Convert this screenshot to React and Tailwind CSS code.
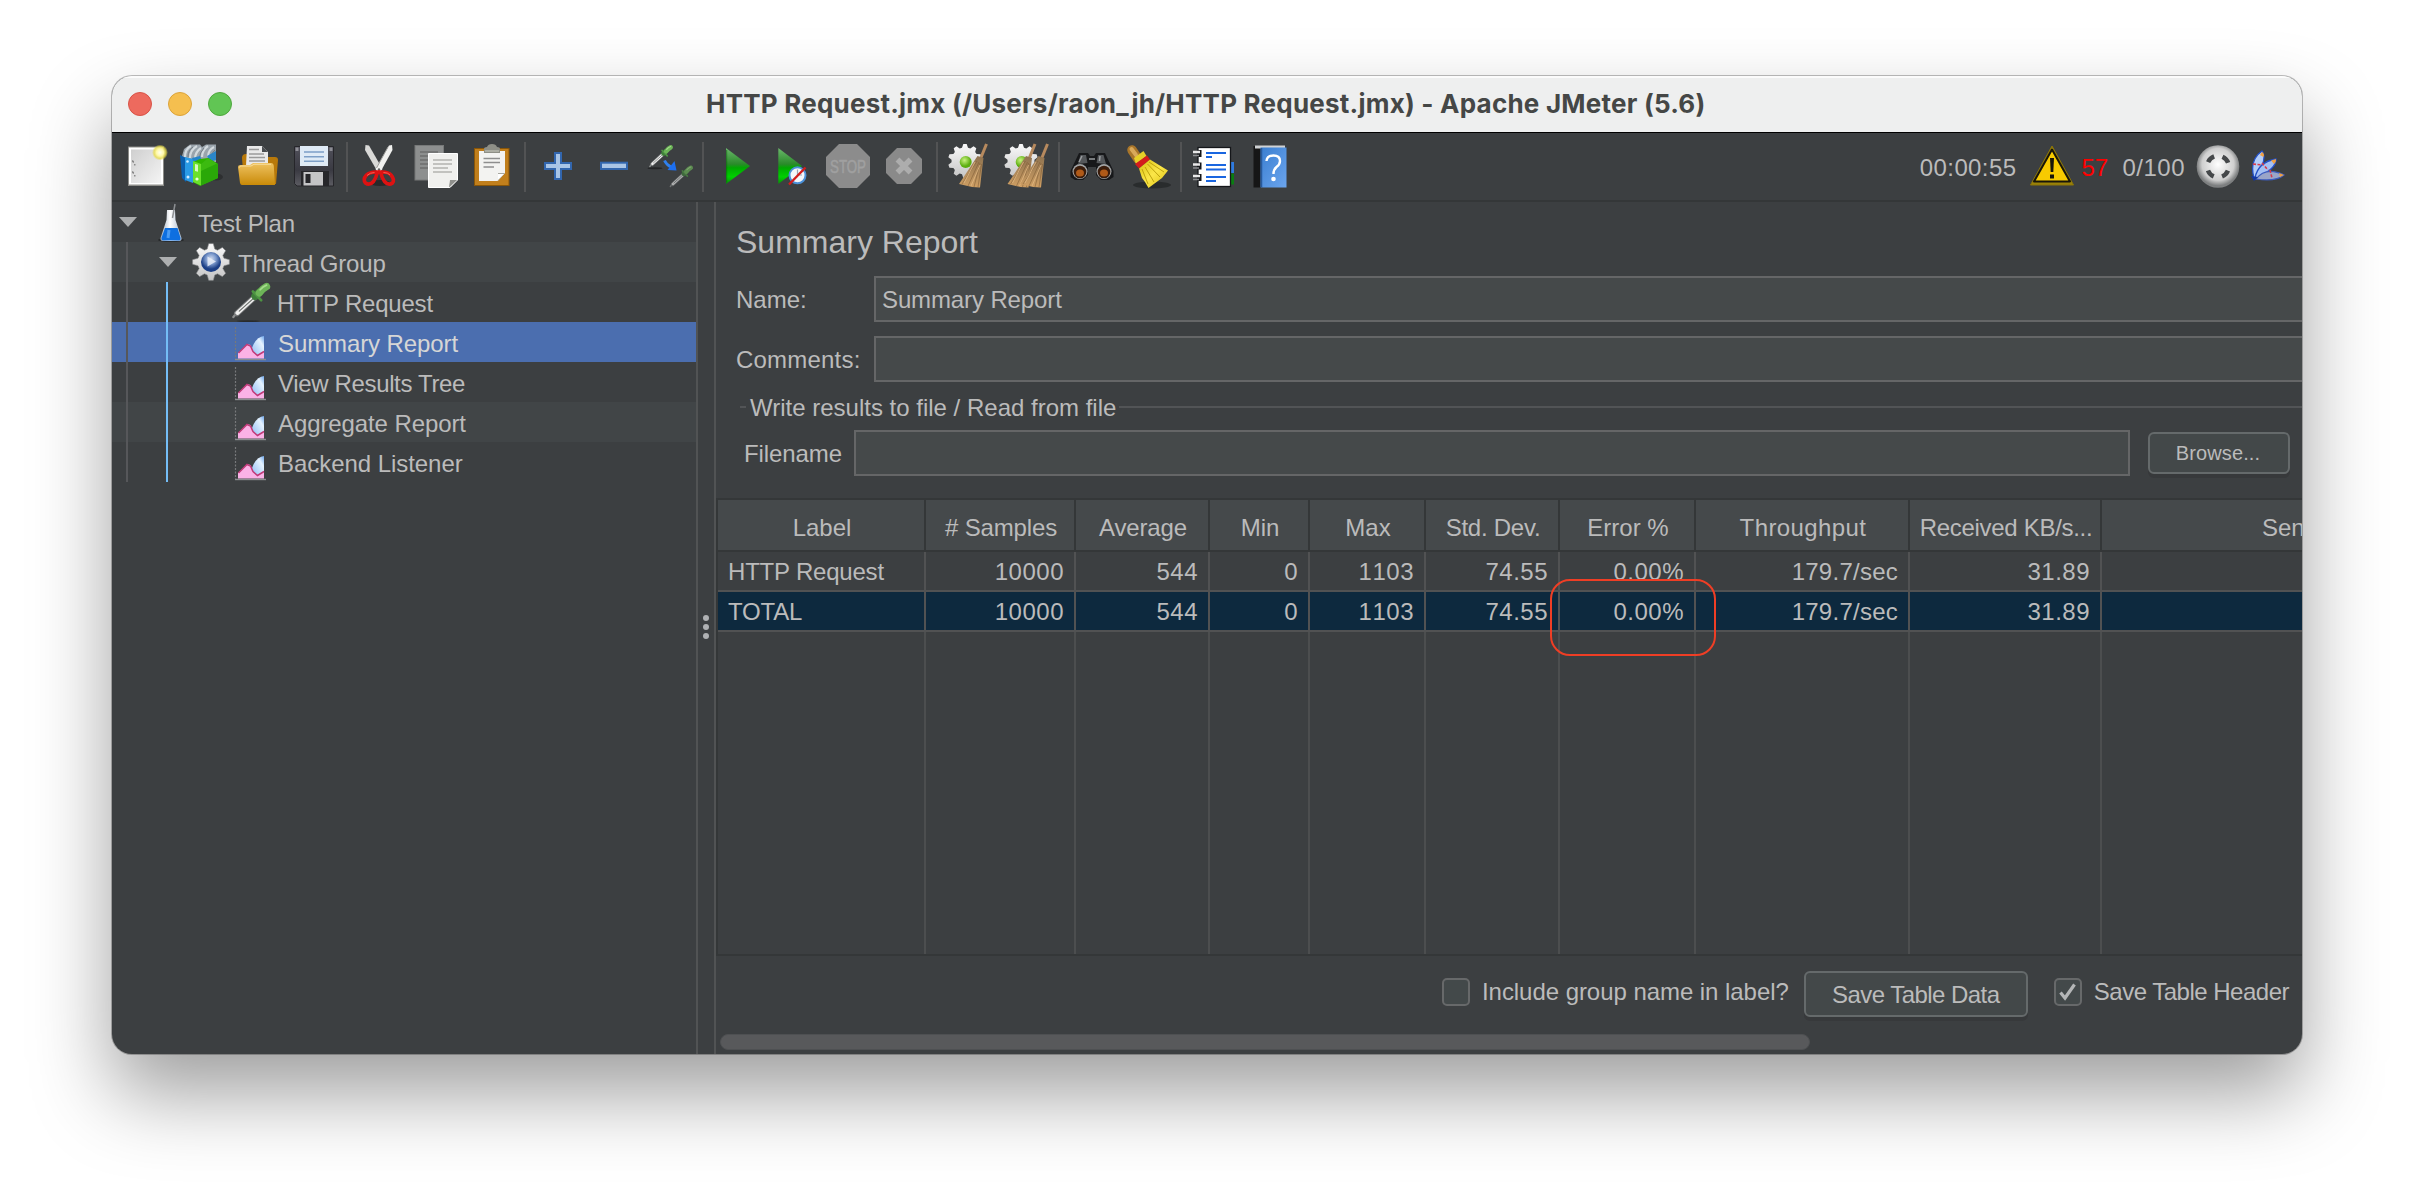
import React from "react";

function Svg({ children, className = "h-11 w-11" }) {
  return (
    <svg viewBox="0 0 44 44" className={className + " shrink-0"} fill="none" overflow="visible">
      {children}
    </svg>
  );
}

function Defs() {
  return (
    <svg className="absolute h-0 w-0" aria-hidden="true">
      <defs>
        <linearGradient id="page" x1="0" y1="0" x2="1" y2="1">
          <stop offset="0" stopColor="#cfcfcf" />
          <stop offset="1" stopColor="#f4f4f4" />
        </linearGradient>
        <radialGradient id="glow">
          <stop offset="0" stopColor="#fffef0" />
          <stop offset="0.45" stopColor="#fff9a8" />
          <stop offset="0.75" stopColor="#e8dc4c" stopOpacity="0.8" />
          <stop offset="1" stopColor="#e8dc4c" stopOpacity="0" />
        </radialGradient>
        <linearGradient id="folder" x1="0" y1="0" x2="0" y2="1">
          <stop offset="0" stopColor="#eec260" />
          <stop offset="1" stopColor="#c98a08" />
        </linearGradient>
        <linearGradient id="floppy" x1="0" y1="0" x2="0" y2="1">
          <stop offset="0" stopColor="#50505a" />
          <stop offset="0.6" stopColor="#3a3a42" />
          <stop offset="1" stopColor="#5c5c62" />
        </linearGradient>
        <linearGradient id="playGreen" x1="0" y1="0" x2="0" y2="1">
          <stop offset="0" stopColor="#6cb86c" />
          <stop offset="0.45" stopColor="#2a8a2a" />
          <stop offset="0.55" stopColor="#00a800" />
          <stop offset="0.8" stopColor="#00d000" />
          <stop offset="1" stopColor="#0a8a0a" />
        </linearGradient>
        <linearGradient id="straw" x1="0" y1="0" x2="0" y2="1">
          <stop offset="0" stopColor="#8f7350" />
          <stop offset="1" stopColor="#cf9f63" />
        </linearGradient>
        <linearGradient id="gearGray" x1="0" y1="0" x2="0" y2="1">
          <stop offset="0" stopColor="#fafafa" />
          <stop offset="1" stopColor="#c4c4c4" />
        </linearGradient>
        <radialGradient id="lime" cx="0.4" cy="0.35">
          <stop offset="0" stopColor="#c9f280" />
          <stop offset="1" stopColor="#5cae10" />
        </radialGradient>
        <linearGradient id="skirt" x1="0" y1="0" x2="1" y2="1">
          <stop offset="0" stopColor="#d8bf10" />
          <stop offset="0.5" stopColor="#fbe648" />
          <stop offset="1" stopColor="#dcc010" />
        </linearGradient>
        <linearGradient id="book" x1="0" y1="0" x2="1" y2="1">
          <stop offset="0" stopColor="#3a7ed0" />
          <stop offset="1" stopColor="#6ba5ee" />
        </linearGradient>
        <radialGradient id="ball" cx="0.5" cy="0.45">
          <stop offset="0" stopColor="#ffffff" />
          <stop offset="0.75" stopColor="#cfcfcf" />
          <stop offset="1" stopColor="#7d7f80" />
        </radialGradient>
        <linearGradient id="sky" x1="1" y1="0" x2="0" y2="1">
          <stop offset="0" stopColor="#6fa8ee" />
          <stop offset="0.3" stopColor="#e6f3ff" />
          <stop offset="1" stopColor="#8fbcf4" />
        </linearGradient>
        <radialGradient id="gearBlue" cx="0.5" cy="0.35">
          <stop offset="0" stopColor="#d4dcee" />
          <stop offset="0.5" stopColor="#7f9cce" />
          <stop offset="1" stopColor="#1c3f86" />
        </radialGradient>
        <linearGradient id="glass" x1="0" y1="0" x2="1" y2="0">
          <stop offset="0" stopColor="#9aa8b8" />
          <stop offset="0.45" stopColor="#ffffff" />
          <stop offset="1" stopColor="#a8b8cc" />
        </linearGradient>
      </defs>
    </svg>
  );
}

function gearPath(cx, cy, teeth, ro, ri) {
  const pts = [];
  for (let i = 0; i < teeth; i++) {
    const a = (i / teeth) * Math.PI * 2 - Math.PI / 2;
    const w = Math.PI / teeth;
    [[-0.95, ri], [-0.42, ro], [0.42, ro], [0.95, ri]].forEach(([k, r]) => {
      const t = a + w * k * 0.75;
      pts.push((cx + Math.cos(t) * r).toFixed(2) + "," + (cy + Math.sin(t) * r).toFixed(2));
    });
  }
  return "M" + pts.join("L") + "Z";
}

const NewIcon = () => (
  <Svg>
    <rect x="4" y="2.5" width="36" height="39.5" fill="#8c8c88" />
    <rect x="5" y="3.5" width="34" height="37" fill="#fff" />
    <rect x="7" y="5.5" width="30" height="33.5" fill="url(#page)" />
    <path d="M8 16l2 1v2l-2-1zM8 27l2 1v2l-2-1zM10 20h1.5v1.5H10zM10 31h1.5v1.5H10z" fill="#8a8a8a" />
    <circle cx="36" cy="8.5" r="8" fill="url(#glow)" />
  </Svg>
);

const TemplatesIcon = () => (
  <Svg>
    <ellipse cx="36" cy="33" rx="7" ry="3.5" fill="#000" opacity="0.25" />
    <path d="M2 12L4 5L10 0.5H20L22 3L26 0.500H36V18L20 22L4 20Z" fill="#9aa4ac" />
    <path d="M5 13Q5 5 11 2M10 14Q10 6 17 2M15 15Q15 8 21 4M22 13Q22 6 28 2M28 13Q28 6 34 3" stroke="#d3dade" strokeWidth="2.200" />
    <path d="M8 13Q8 6 13 3M19 15Q20 8 24 4M31 13Q32 8 35 6" stroke="#747d84" strokeWidth="1" />
    <path d="M27 12L36 7V16L30 18Z" fill="#2b86c8" />
    <path d="M0 11L6 14V38L2 34Z" fill="#0a5fae" />
    <path d="M5 13L13 15V39L5 36Z" fill="#2a9be6" />
    <path d="M12 14L20 12L22 17L14 20Z" fill="#2485cc" />
    <path d="M13 18L20 15L28 14L38 20V34L20 42L13 38Z" fill="#2fb400" />
    <path d="M13 17L21 20V41.5L13 38Z" fill="#6be02c" />
    <path d="M21 20L28 14L38 20V34L21 41.5Z" fill="#2aa808" />
    <path d="M21 20L28 14L37 19.500L21 27Z" fill="#3cba10" />
    <path d="M15 20l3 .8v7l-3-.8z" fill="#d8f8c4" />
    <circle cx="7.500" cy="17.500" r="1.300" fill="#d4ecff" />
    <circle cx="8" cy="33" r="1.500" fill="#d4ecff" />
    <circle cx="17" cy="35" r="1.600" fill="#e8ffd8" />
  </Svg>
);

const OpenIcon = () => (
  <Svg>
    <path d="M6 14Q6 10 10 10H16L18 13H39Q42 13 42 16L40 40H8Z" fill="#b8790a" />
    <path d="M11 2H26L32 8V22H10Z" fill="#e9e9e9" />
    <path d="M26 2L32 8H26Z" fill="#4a4d50" />
    <path d="M13 5.500H23M13 10H28M13 13.500H29M13 17H29" stroke="#9a9a9a" strokeWidth="1.700" />
    <path d="M2 23Q2 21 4.500 21H14L17 19H35Q37.500 19 37.800 22L39 41H6Q4.500 41 4 39Z" fill="url(#folder)" />
    <path d="M3.500 23.500Q3.500 22 5 22H15L18 20.300H35" stroke="#f7dc9a" strokeWidth="1" />
  </Svg>
);

const SaveIcon = () => (
  <Svg>
    <path d="M2.500 2.500H41.500V42H5L2.500 39.500Z" fill="url(#floppy)" stroke="#26262a" />
    <path d="M3.500 3.500H6.500V7H3.500ZM37.500 3.500H40.500V7H37.500Z" fill="#8d8d94" />
    <rect x="8" y="2" width="28" height="20" fill="#dfeaf6" />
    <path d="M12 8H32M12 12.700H32M12 17.300H32" stroke="#7e9fc8" strokeWidth="1.600" />
    <rect x="9" y="27" width="28" height="15" fill="#26262a" />
    <rect x="11.500" y="28" width="19.500" height="13.500" fill="#c4c4c6" />
    <rect x="13.500" y="30" width="5" height="9" fill="#26262a" />
  </Svg>
);

const CutIcon = () => (
  <Svg>
    <ellipse cx="22" cy="39" rx="11" ry="3" fill="#000" opacity="0.35" />
    <path d="M7.500 1L11 1.500L24.500 25L21 29.500L18 25L7 6Z" fill="#d9d9d7" />
    <path d="M34 1L31 1.500L17.500 25L20.500 29.500L24 25L34.500 6Z" fill="#f1f1ef" />
    <path d="M30 3L18.500 24" stroke="#9b9b98" strokeWidth="1" />
    <circle cx="21" cy="25.500" r="1.200" fill="#666" />
    <path d="M19.500 28Q12 27.500 8.500 31Q4.500 35.500 7.500 39Q11.500 42 15.500 37.500Q18 34 19.500 28Z" stroke="#dd1212" strokeWidth="3.600" />
    <path d="M22.500 28Q30 27.500 33 31Q37 35.500 34.500 39Q30.500 42 26.500 37.500Q24 34 22.500 28Z" stroke="#dd1212" strokeWidth="3.600" />
    <path d="M16.500 28.500Q12 28.500 9 31.500M25.500 28.500Q30 28.500 32 31" stroke="#ff6a5a" strokeWidth="0.900" />
  </Svg>
);

const CopyIcon = () => (
  <Svg>
    <rect x="1" y="1.500" width="28.500" height="34.500" fill="#8d8f8f" stroke="#777979" />
    <path d="M6 8H24M6 12H18M6 16H18M6 20H18M6 24H18" stroke="#6d6f6f" strokeWidth="1.400" />
    <path d="M14.500 9.500H43.500V36L36 43.500H14.500Z" fill="#f0f0ee" stroke="#fff" />
    <path d="M19 16H38M19 20H38M19 24H34M19 28H38" stroke="#b2b2b0" strokeWidth="1.400" />
    <path d="M43 36H36L35 43.500Z" fill="#8f908c" />
  </Svg>
);

const PasteIcon = () => (
  <Svg>
    <rect x="4.500" y="4.500" width="34.500" height="37" fill="#c17f1c" stroke="#8a5608" />
    <path d="M9 7H35V29L27.500 37H9Z" fill="#f3f3f1" />
    <path d="M35 29H28V37Z" fill="#a6a69f" />
    <path d="M34 30L28 36V30Z" fill="#fff" />
    <path d="M13.500 14.500H30M13.500 18.500H30M13.500 23H24" stroke="#8e8e8e" strokeWidth="1.500" />
    <path d="M14 9V5Q14 3 17 3Q18 0 22 0Q26 0 27 3Q30 3 30 5V9Z" fill="#8e8f86" />
    <path d="M15 7H29" stroke="#b7b8ae" strokeWidth="1.500" />
  </Svg>
);

const PlusIcon = () => (
  <Svg>
    <path d="M18 8H26V18H36V26H26V36H18V26H8V18H18Z" fill="#3266ae" />
    <path d="M20 10H24V20H34V24H24V34H20V24H10V20H20Z" fill="#a9c5e6" />
  </Svg>
);

const MinusIcon = () => (
  <Svg>
    <rect x="8" y="17.700" width="28" height="8.300" fill="#3266ae" />
    <rect x="10" y="19.700" width="24" height="4.300" fill="#a9c5e6" />
  </Svg>
);

function Pipette() {
  return (
    <g strokeLinecap="round">
      <path d="M1.500 38.500L6 33" stroke="#8d8f8f" strokeWidth="2.500" />
      <path d="M5.500 34.500L24 17.500" stroke="#77797a" strokeWidth="6.500" />
      <path d="M6 34L24 17.500" stroke="#f0f0f0" strokeWidth="4.400" />
      <path d="M8 32L23 18.500" stroke="#6b6f6b" strokeWidth="1.300" />
      <path d="M25.500 15.500L30 11.500" stroke="#3f7f3a" strokeWidth="8.500" />
      <path d="M23 10.500L32 20" stroke="#4d9442" strokeWidth="3" />
      <path d="M30 12Q34 7 38 5" stroke="#6db558" strokeWidth="8" />
      <path d="M31 8.500Q34 5 38 3.500" stroke="#a5dc8c" strokeWidth="2" />
    </g>
  );
}

const ToggleIcon = () => (
  <Svg>
    <ellipse cx="7" cy="24.300" rx="7.500" ry="1" fill="#000" opacity="0.4" />
    <g transform="translate(1 0.500) scale(0.570)"><Pipette /></g>
    <g transform="translate(21.500 21) scale(0.560)" opacity="0.65"><Pipette /></g>
    <path d="M16.500 16.500Q18.500 21 23 23" stroke="#2f80ee" strokeWidth="2.800" />
    <path d="M26.500 17L28.500 26.500L19.500 26Z" fill="#1d6ff0" />
  </Svg>
);

const PlayIcon = () => (
  <Svg>
    <path d="M12 4L36 22L12 40Z" fill="url(#playGreen)" />
    <path d="M12.700 6V38.500" stroke="#0b5c0b" strokeWidth="1" opacity="0.600" />
  </Svg>
);

const PlayNoTimerIcon = () => (
  <Svg>
    <path d="M8.300 4L32 22L8.300 40Z" fill="url(#playGreen)" />
    <circle cx="27.500" cy="31.300" r="8" fill="#f3f6fa" stroke="#4a90d8" strokeWidth="2" />
    <path d="M27.500 31V25.500M27.500 31H32" stroke="#98a6b8" strokeWidth="1.200" />
    <path d="M19 40.500L35.500 23.500" stroke="#d21c1c" strokeWidth="2.400" />
  </Svg>
);

const StopIcon = () => (
  <Svg>
    <path d="M13 0H31L44 13V31L31 44H13L0 31V13Z" fill="#8c8c8c" />
    <text x="22" y="28.500" textAnchor="middle" textLength="36" lengthAdjust="spacingAndGlyphs" fontFamily="Liberation Sans, sans-serif" fontWeight="400" fontSize="18.500" fill="#a2a2a2" stroke="#9e9e9e" strokeWidth="0.600">STOP</text>
  </Svg>
);

const ShutdownIcon = () => (
  <Svg>
    <path d="M15 4H29L40 15V29L29 40H15L4 29V15Z" fill="#8a8a8a" />
    <path d="M15.500 15.500L28.500 28.500M28.500 15.500L15.500 28.500" stroke="#adadad" strokeWidth="5.500" />
  </Svg>
);

function Besom({ x }) {
  return (
    <g transform={"translate(" + x + " 0)"}>
      <path d="M39.500 0L33 16" stroke="#b78a5e" strokeWidth="3" />
      <path d="M30.500 12L36.500 14L35 26L33 43.500L25 43L12 40L20 28Z" fill="url(#straw)" />
      <path d="M30 17L15 40M32 18L21 42M33 19L27 43M34.500 20L31 43" stroke="#7d5c36" strokeWidth="0.800" opacity="0.700" />
      <path d="M28 18L17 39M33 21L24 42" stroke="#e2b983" strokeWidth="0.800" />
    </g>
  );
}

const ClearIcon = () => (
  <Svg>
    <path d={gearPath(17, 17, 10, 17, 13.500)} fill="url(#gearGray)" />
    <circle cx="17.700" cy="18" r="6" fill="url(#lime)" />
    <Besom x={-1} />
  </Svg>
);

const ClearAllIcon = () => (
  <Svg>
    <path d={gearPath(17, 17, 10, 17, 13.500)} fill="url(#gearGray)" />
    <circle cx="17.700" cy="18" r="6" fill="url(#lime)" />
    <Besom x={-8.500} />
    <Besom x={4} />
  </Svg>
);

const BinocularsIcon = () => (
  <Svg>
    <path d="M9 9H18L20 12H24L26 9H35L43.500 27V33L39 36H31L26 31V23H18V31L13 36H5L0.500 33V27Z" fill="#17181a" />
    <path d="M10.500 11H16L17.500 19L8 20ZM33.500 11H28L26.500 19L36 20Z" fill="#54575a" />
    <path d="M12 12L9 18M30 12L29.500 17M19 15H25" stroke="#9a9da0" strokeWidth="1.500" />
    <circle cx="10" cy="27.500" r="7.500" fill="#a2a4a5" />
    <circle cx="34" cy="27.500" r="7.500" fill="#a2a4a5" />
    <circle cx="10" cy="28" r="6.300" fill="#3b1d0c" />
    <circle cx="34" cy="28" r="6.300" fill="#3b1d0c" />
    <ellipse cx="10" cy="29" rx="4" ry="3.500" fill="#b05a18" />
    <ellipse cx="34" cy="29" rx="4" ry="3.500" fill="#b05a18" />
  </Svg>
);

const SearchResetIcon = () => (
  <Svg>
    <ellipse cx="26" cy="41" rx="19" ry="3.500" fill="#000" opacity="0.3" />
    <path d="M6 6L12 15" stroke="#a9762a" strokeWidth="9.500" strokeLinecap="round" />
    <path d="M5.500 5L10 11" stroke="#d9a95a" strokeWidth="4" strokeLinecap="round" />
    <path d="M8 14L17.500 7L20.500 12L10 20Z" fill="#e6cf28" />
    <path d="M9 20L21 11.500L24 15.500L13 24.500Z" fill="#d41c1c" />
    <path d="M13 24.500L24 15.500L42 26.500L36 34L22.500 44L19 38L16 34Z" fill="url(#skirt)" />
    <path d="M16 25L22 40M19 23L28 38M21.500 20L34 33M23 18L38 28" stroke="#b79c08" strokeWidth="0.900" />
  </Svg>
);

const ListIcon = () => (
  <Svg>
    <rect x="37" y="18" width="5" height="11" fill="#2f7be0" />
    <rect x="37" y="29.500" width="5" height="11" fill="#0a7d12" />
    <rect x="6" y="3.500" width="32.500" height="39" fill="#fff" stroke="#15171a" strokeWidth="1.300" />
    {[7, 19.5, 31].map((y) => (
      <g key={y}>
        <rect x="5" y={y - 1} width="4.500" height="7" fill="#15171a" />
        <path d={"M1 " + (y + 1) + "H8"} stroke="#e8e8e8" strokeWidth="2.400" />
        <path d={"M1 " + (y + 4.5) + "H7"} stroke="#8b8d8f" strokeWidth="1.600" />
      </g>
    ))}
    <path d="M14 9H34M14 13H20M14 21H34M14 25.500H34M14 33H34M14 37H24" stroke="#1a66e0" strokeWidth="2" />
  </Svg>
);

const HelpIcon = () => (
  <Svg>
    <rect x="5.500" y="2" width="9" height="41.500" fill="#161616" />
    <rect x="7" y="1.500" width="30" height="3" fill="#cfd2d4" />
    <rect x="12.500" y="3.500" width="26" height="40" fill="url(#book)" />
    <path d="M13.500 4V43" stroke="#285a9c" strokeWidth="1.500" />
    <path d="M18.500 17Q19 11.500 25.500 11.500Q32 11.500 32 17Q32 20.500 28.500 23Q25.500 25.500 25.500 30" stroke="#fff" strokeWidth="2.400" />
    <circle cx="25.500" cy="35" r="2.300" fill="#fff" />
  </Svg>
);

const WarningIcon = () => (
  <Svg>
    <path d="M22 2L43.500 41H0.500Z" fill="#9a8208" stroke="#8c7508" strokeWidth="1" strokeLinejoin="round" />
    <path d="M22 5.500L40 37.500H4Z" fill="#f7ca00" stroke="#17150a" strokeWidth="2" strokeLinejoin="round" />
    <path d="M20 14H24L23.300 28H20.700Z" fill="#17150a" />
    <rect x="20" y="30.500" width="4" height="4" fill="#17150a" />
  </Svg>
);

const RemoteIcon = () => (
  <Svg>
    <circle cx="22" cy="22.500" r="21.300" fill="url(#ball)" />
    <circle cx="22" cy="22.500" r="10.800" stroke="#45484a" strokeWidth="4.500" strokeDasharray="8.400 8.560" strokeDashoffset="-4.300" />
  </Svg>
);

const FeatherIcon = () => (
  <svg viewBox="0 0 36 32" className="h-8 w-9 shrink-0" fill="none">
    <path d="M4 28Q-1 10 12 1Q18 8 6 28Z" fill="#b4cdf8" stroke="#2350c8" strokeWidth="1.300" />
    <path d="M5 28Q8 12 26 9Q27 18 6 29Z" fill="#a4c0f4" stroke="#2350c8" strokeWidth="1.300" />
    <path d="M6 29Q16 16 34 25Q26 32 6 29Z" fill="#9aa5c8" stroke="#3c5cc0" strokeWidth="1.200" />
    <path d="M12 2Q15 4 13.500 7L10 5ZM21 10.500L26 9Q26.500 12 24 14ZM29 23L34 25L30 27Z" fill="#f0a040" />
    <path d="M3 14L12 15M12 13L18 20M20 20L22 28" stroke="#d63a4c" strokeWidth="1.600" strokeDasharray="3 1.500" />
    <path d="M1 26L8 27L4 31Z" fill="#1438a0" />
  </svg>
);

const FlaskIcon = () => (
  <svg viewBox="0 0 36 40" className="h-10 w-9 shrink-0" fill="none">
    <ellipse cx="18" cy="38" rx="13" ry="1.800" fill="#1a1c1e" opacity="0.7" />
    <path d="M14 8H22L22.500 18L28.500 36Q29 39 26 39H10Q7 39 7.500 36L13.500 18Z" fill="url(#glass)" />
    <path d="M12 26H24.500L27.500 36Q27.800 38.500 26 38.500H10Q8.200 38.500 8.500 36Z" fill="#0e6fe0" />
    <path d="M16 28L15 36" stroke="#4a9cf4" strokeWidth="3" />
    <path d="M19.500 16L22 2" stroke="#8d9093" strokeWidth="1.500" />
  </svg>
);

const ThreadIcon = () => (
  <svg viewBox="0 0 38 38" className="mx-px h-[38px] w-[38px] shrink-0" fill="none">
    <path d={gearPath(19, 19, 8, 18.500, 13.500)} fill="url(#gearGray)" stroke="#8d8f90" strokeWidth="0.600" />
    <circle cx="19" cy="19" r="10" fill="url(#gearBlue)" />
    <path d="M15.500 13.500L24 18.500L15.500 23.500Z" fill="#e8edf8" opacity="0.85" />
  </svg>
);

const ChartIcon = () => (
  <svg viewBox="0 0 36 38" className="h-[38px] w-9 shrink-0" fill="none">
    <path d="M2.500 4V36" stroke="#77797b" strokeWidth="1.200" strokeDasharray="2 1.500" />
    <path d="M2 36.500H33" stroke="#8b8d8f" strokeWidth="1.400" />
    <path d="M31 13V32H20L19 25Q23 14 31 13Z" fill="url(#sky)" />
    <path d="M5 35.500V30L14 21L17.500 22L20 28L24.500 32.500L31 28V35.500Z" fill="#fbb2e6" />
    <path d="M5.500 30L14 21.500L17.500 23L20 28.500L24.500 32.500L31 28.500" stroke="#c03a78" strokeWidth="1.500" />
  </svg>
);

const PipetteIcon = () => (
  <svg viewBox="0 0 44 44" className="h-10 w-10 shrink-0" fill="none">
    <ellipse cx="18" cy="43" rx="13" ry="1" fill="#1a1c1e" opacity="0.6" />
    <Pipette />
  </svg>
);

const toolGroups = [
  [NewIcon, TemplatesIcon, OpenIcon, SaveIcon],
  [CutIcon, CopyIcon, PasteIcon],
  [PlusIcon, MinusIcon, ToggleIcon],
  [PlayIcon, PlayNoTimerIcon, StopIcon, ShutdownIcon],
  [ClearIcon, ClearAllIcon],
  [BinocularsIcon, SearchResetIcon],
  [ListIcon, HelpIcon],
];

function Toolbar() {
  return (
    <div className="flex h-[70px] shrink-0 items-start border-b-2 border-t border-b-[#343738] border-t-black pl-1.5">
      {toolGroups.map((group, g) => (
        <React.Fragment key={g}>
          {g > 0 && (
            <div className="mt-[9px] flex h-[50px] w-2.5 justify-center">
              <div className="w-0.5 bg-[#525354]" />
            </div>
          )}
          {group.map((Icon, i) => (
            <button key={i} className="mt-[11px] flex h-11 w-14 justify-center">
              <Icon />
            </button>
          ))}
        </React.Fragment>
      ))}
      <div className="ml-auto mt-[11px] flex h-11 items-center pr-4">
        <span className="mr-[14px] pt-[3px] tracking-[0.400px]">00:00:55</span>
        <WarningIcon />
        <span className="ml-[7px] w-[27px] pt-[3px] text-[#ff0000]">57</span>
        <span className="ml-[14px] mr-[11px] pt-[3px] tracking-[0.500px]">0/100</span>
        <RemoteIcon />
        <div className="ml-[10px] flex h-8"><FeatherIcon /></div>
      </div>
    </div>
  );
}

const Caret = () => (
  <svg viewBox="0 0 18 10" className="h-2.5 w-[18px] shrink-0">
    <path d="M0 0H18L9 10Z" fill="#adafb0" />
  </svg>
);

const listeners = [
  { label: "Summary Report", row: "bg-[#4b6eaf] text-[#d6d6d6]", text: "tracking-[-0.100px]" },
  { label: "View Results Tree", row: "", text: "tracking-[-0.350px]" },
  { label: "Aggregate Report", row: "bg-[#414547]", text: "tracking-[-0.100px]" },
  { label: "Backend Listener", row: "", text: "tracking-[-0.050px]" },
];

function Tree() {
  return (
    <div className="relative w-[584px] shrink-0">
      <div className="flex h-10 items-center pl-[7px]">
        <Caret />
        <div className="ml-4 flex"><FlaskIcon /></div>
        <span className="ml-[9px] pt-[3px] tracking-[-0.200px]">Test Plan</span>
      </div>
      <div className="flex h-10 items-center bg-[#414547] pl-[47px]">
        <Caret />
        <div className="ml-3.5 flex"><ThreadIcon /></div>
        <span className="ml-[7px] pt-[3px] tracking-[-0.150px]">Thread Group</span>
      </div>
      <div className="flex h-10 items-center pl-[120px]">
        <PipetteIcon />
        <span className="ml-[5px] pt-[3px] tracking-[-0.200px]">HTTP Request</span>
      </div>
      {listeners.map((l) => (
        <div key={l.label} className={"flex h-10 items-center pl-[121px] " + l.row}>
          <ChartIcon />
          <span className={"ml-[9px] pt-[3px] " + l.text}>{l.label}</span>
        </div>
      ))}
      <div className="absolute left-3.5 top-10 h-60 w-0.5 bg-[#56575a]" />
      <div className="absolute left-[54px] top-20 h-50 w-0.5 bg-[#74bdf6]" />
    </div>
  );
}

const columns = [
  { name: "Label", w: "w-[208px]", values: ["HTTP Request", "TOTAL"], left: true },
  { name: "# Samples", w: "w-[150px]", head: "tracking-[-0.150px]", values: ["10000", "10000"] },
  { name: "Average", w: "w-[134px]", head: "tracking-[-0.150px]", values: ["544", "544"] },
  { name: "Min", w: "w-[100px]", values: ["0", "0"] },
  { name: "Max", w: "w-[116px]", values: ["1103", "1103"] },
  { name: "Std. Dev.", w: "w-[134px]", head: "tracking-[-0.250px]", values: ["74.55", "74.55"] },
  { name: "Error %", w: "w-[136px]", values: ["0.00%", "0.00%"] },
  { name: "Throughput", w: "w-[214px]", head: "tracking-[0.400px]", values: ["179.7/sec", "179.7/sec"], cell: "tracking-[0.250px]" },
  { name: "Received KB/s...", w: "w-[192px]", head: "tracking-[-0.300px]", values: ["31.89", "31.89"] },
  { name: "Sent KB/sec", w: "w-[452px]", values: ["", ""] },
];

function ReportTable() {
  return (
    <div className="relative h-[458px] shrink-0 border-y-2 border-l-2 border-[#343738]">
      <div className="flex h-[454px] overflow-hidden">
        {columns.map((c) => (
          <div key={c.name} className={"flex shrink-0 flex-col " + c.w}>
            <div className={"flex h-[52px] shrink-0 items-center justify-center whitespace-nowrap border-b-2 border-r-2 border-[#343738] bg-[#45494b] pl-0.5 pt-[6px] " + (c.head || "")}>
              {c.name}
            </div>
            {c.values.map((v, i) => (
              <div
                key={i}
                className={
                  "flex h-10 shrink-0 items-center border-b-2 border-r-2 border-[#515253] pt-px " +
                  (i === 1 ? "bg-[#0d293e] " : "") +
                  (c.left
                    ? "pl-2.5 tracking-[-0.200px]"
                    : "justify-end pr-2.5 [font-kerning:none] " + (c.cell || "tracking-[0.500px]"))
                }
              >
                {v}
              </div>
            ))}
            <div className="grow border-r-2 border-[#4c4e4f]" />
          </div>
        ))}
      </div>
      <div className="absolute left-[832px] top-[79px] h-[77px] w-[166px] rounded-[20px] border-2 border-[#ef3e25]" />
    </div>
  );
}

const field = "h-[46px] border-2 border-[#656667] bg-[#45494a]";
const button = "flex items-center justify-center rounded-md border-2 border-[#656a6b] bg-[#434849] shadow-[0_4px_0_#37393b]";

function CheckBox({ checked }) {
  return (
    <div className="h-7 w-7 shrink-0 rounded-[5px] border-2 border-[#67696a] bg-[#43494a]">
      {checked && (
        <svg viewBox="0 0 24 24" className="h-6 w-6" fill="none">
          <path d="M4.500 12.500L9 18L18.500 4.500" stroke="#b4b6b7" strokeWidth="3.200" />
        </svg>
      )}
    </div>
  );
}

function ReportPanel() {
  return (
    <div className="flex min-w-0 grow flex-col overflow-hidden">
      <h1 className="mt-[22px] h-[52px] pl-5 text-[32px] leading-[36px] font-normal">Summary Report</h1>
      <div className="flex h-[46px] shrink-0 items-center">
        <label className="w-[158px] pl-5 pt-[2px]">Name:</label>
        <div className={"flex grow items-center border-r-0 pl-1.5 pt-[2px] tracking-[-0.120px] " + field}>Summary Report</div>
      </div>
      <div className="mt-3.5 flex h-[46px] shrink-0 items-center">
        <label className="w-[158px] pl-5 pt-[2px] tracking-[0.200px]">Comments:</label>
        <div className={"grow border-r-0 " + field} />
      </div>
      <div className="mt-2.5 flex h-[30px] shrink-0 items-center pl-6">
        <div className="h-0.5 w-1.5 bg-[#525456]" />
        <span className="ml-1 mr-[3px] whitespace-nowrap pt-px">Write results to file / Read from file</span>
        <div className="h-0.5 grow bg-[#525456]" />
      </div>
      <div className="mt-2 flex h-[46px] shrink-0 items-center pr-3">
        <label className="w-[138px] shrink-0 pl-[28px] pt-[2px] tracking-[-0.100px]">Filename</label>
        <div className={"mr-[18px] grow " + field} />
        <button className={"h-[42px] w-[142px] pr-0.5 text-[20px] tracking-[0.100px] " + button}>Browse...</button>
      </div>
      <div className="h-[22px] shrink-0" />
      <ReportTable />
      <div className="flex h-[74px] shrink-0 items-center justify-end whitespace-nowrap pb-0.5 pr-[13px]">
        <CheckBox />
        <span className="ml-3 mr-[15px] tracking-[-0.050px]">Include group name in label?</span>
        <button className={"mt-[3px] h-[46px] w-[224px] pt-[2px] tracking-[-0.550px] " + button}>Save Table Data</button>
        <div className="ml-[26px] flex"><CheckBox checked /></div>
        <span className="ml-3 tracking-[-0.500px]">Save Table Header</span>
      </div>
      <div className="mt-1 pl-1">
        <div className="h-4 w-[1090px] rounded-full border border-[#4e5052] bg-[#58595b]" />
      </div>
    </div>
  );
}

export default function App() {
  return (
    <div className="h-[1202px] w-[2414px] overflow-hidden bg-white pl-28 pt-[76px] font-['Liberation_Sans',Arial,sans-serif] text-[24px] leading-[28px] text-[#bbbbbb]">
      <Defs />
      <div className="flex h-[978px] w-[2190px] flex-col overflow-hidden rounded-[20px] bg-[#3c3f41] shadow-[0_0_0_1px_rgba(0,0,0,0.250),0_40px_80px_rgba(0,0,0,0.380)]">
        <div className="flex h-14 shrink-0 items-center border-t-2 border-[#fbfbfb] bg-[#eeefef] pb-0.5">
          <div className="flex w-[594px] shrink-0 gap-4 pl-4">
            <div className="h-6 w-6 rounded-full border border-[#d85347] bg-[#ed6a5e]" />
            <div className="h-6 w-6 rounded-full border border-[#dba33a] bg-[#f5bf4f]" />
            <div className="h-6 w-6 rounded-full border border-[#4fa73e] bg-[#61c554]" />
          </div>
          <div className="-mt-px whitespace-nowrap font-['Inter',sans-serif] text-[26px] font-bold tracking-[0.220px] text-[#454746]">
            HTTP Request.jmx (/Users/raon_jh/HTTP Request.jmx) - Apache JMeter (5.6)
          </div>
        </div>
        <Toolbar />
        <div className="flex min-h-0 grow">
          <Tree />
          <div className="flex w-5 shrink-0 flex-col items-center gap-[3px] border-x-2 border-[#515354] pt-[413px]">
            <div className="h-1.5 w-1.5 rounded-full bg-[#afb1b3]" />
            <div className="h-1.5 w-1.5 rounded-full bg-[#afb1b3]" />
            <div className="h-1.5 w-1.5 rounded-full bg-[#afb1b3]" />
          </div>
          <ReportPanel />
        </div>
      </div>
    </div>
  );
}
